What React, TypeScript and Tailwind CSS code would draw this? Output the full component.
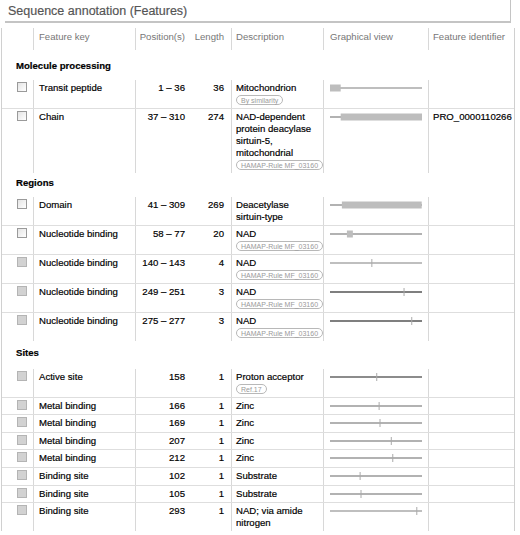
import React from "react";

const COLS = "grid grid-cols-[31px_102px_55px_41px_92px_105px_86px]";
const TRACK_W = 92;
const SEQ_LEN = 310;
const sx = (p: number) => (p * TRACK_W) / SEQ_LEN;

type Mark = { start: number; end: number; tick?: boolean };

interface Feature {
  key: string;
  pos: string;
  len: number;
  desc: string;
  badge?: string;
  id?: string;
  filled?: boolean;
  tall?: boolean;
  mark: Mark;
  line: string;
}

const sections: { title: string; pt: string; pb: string; rows: Feature[] }[] = [
  {
    title: "Molecule processing",
    pt: "pt-[4px]",
    pb: "pb-[8px]",
    rows: [
      { key: "Transit peptide", pos: "1 – 36", len: 36, desc: "Mitochondrion", badge: "By similarity", mark: { start: 1, end: 36 }, line: "#a8a8a8" },
      {
        key: "Chain",
        pos: "37 – 310",
        len: 274,
        desc: "NAD-dependent protein deacylase sirtuin-5, mitochondrial",
        badge: "HAMAP-Rule MF_03160",
        id: "PRO_0000110266",
        mark: { start: 37, end: 310 },
        line: "#999",
      },
    ],
  },
  {
    title: "Regions",
    pt: "pt-[4px]",
    pb: "pb-[8px]",
    rows: [
      { key: "Domain", pos: "41 – 309", len: 269, desc: "Deacetylase sirtuin-type", mark: { start: 41, end: 309 }, line: "#999" },
      { key: "Nucleotide binding", pos: "58 – 77", len: 20, desc: "NAD", badge: "HAMAP-Rule MF_03160", mark: { start: 58, end: 77 }, line: "#999" },
      { key: "Nucleotide binding", pos: "140 – 143", len: 4, desc: "NAD", badge: "HAMAP-Rule MF_03160", filled: true, mark: { start: 140, end: 143, tick: true }, line: "#aaa" },
      { key: "Nucleotide binding", pos: "249 – 251", len: 3, desc: "NAD", badge: "HAMAP-Rule MF_03160", filled: true, mark: { start: 249, end: 251, tick: true }, line: "#555" },
      { key: "Nucleotide binding", pos: "275 – 277", len: 3, desc: "NAD", badge: "HAMAP-Rule MF_03160", filled: true, mark: { start: 275, end: 277, tick: true }, line: "#555" },
    ],
  },
  {
    title: "Sites",
    pt: "pt-[6px]",
    pb: "pb-[10px]",
    rows: [
      { key: "Active site", pos: "158", len: 1, desc: "Proton acceptor", badge: "Ref.17", filled: true, mark: { start: 158, end: 158, tick: true }, line: "#666" },
      { key: "Metal binding", pos: "166", len: 1, desc: "Zinc", filled: true, mark: { start: 166, end: 166, tick: true }, line: "#999" },
      { key: "Metal binding", pos: "169", len: 1, desc: "Zinc", filled: true, tall: true, mark: { start: 169, end: 169, tick: true }, line: "#999" },
      { key: "Metal binding", pos: "207", len: 1, desc: "Zinc", filled: true, mark: { start: 207, end: 207, tick: true }, line: "#999" },
      { key: "Metal binding", pos: "212", len: 1, desc: "Zinc", filled: true, tall: true, mark: { start: 212, end: 212, tick: true }, line: "#999" },
      { key: "Binding site", pos: "102", len: 1, desc: "Substrate", filled: true, tall: true, mark: { start: 102, end: 102, tick: true }, line: "#999" },
      { key: "Binding site", pos: "105", len: 1, desc: "Substrate", filled: true, mark: { start: 105, end: 105, tick: true }, line: "#999" },
      { key: "Binding site", pos: "293", len: 1, desc: "NAD; via amide nitrogen", filled: true, mark: { start: 293, end: 293, tick: true }, line: "#aaa" },
    ],
  },
];

const Box = ({ filled }: { filled?: boolean }) =>
  filled ? (
    <div className="h-[10px] w-[10px] border border-[#b4b4b4] bg-[#d2d2d2]" />
  ) : (
    <div className="h-[10px] w-[10px] border border-[#9a9a9a] bg-gradient-to-br from-[#e4e4e4] to-white" />
  );

const Badge = ({ label }: { label: string }) => (
  <span className="inline-flex h-[10px] items-center whitespace-nowrap rounded-full border border-[#b8b8b8] px-[4px] text-[7px] leading-none text-[#9a9a9a] [-webkit-text-stroke:0px]">
    {label}
  </span>
);

const Track = ({ mark, line }: { mark: Mark; line: string }) => {
  const x1 = sx(mark.start - 1);
  const x2 = sx(mark.end);
  return (
    <svg width={TRACK_W} height={12} className="block">
      <line x1={0} y1={6} x2={TRACK_W} y2={6} stroke={line} strokeWidth={1.5} />
      {mark.tick ? (
        <line x1={(x1 + x2) / 2} y1={2} x2={(x1 + x2) / 2} y2={10} stroke="#aaa" strokeWidth={1} />
      ) : (
        <rect x={x1} y={2.5} width={x2 - x1} height={7} fill="#bdbdbd" />
      )}
    </svg>
  );
};

const divider = "border-l border-[#d8d8d8]";

function FeatureRow({ f, first }: { f: Feature; first: boolean }) {
  const cell = `leading-[12px] pt-[2px] ${f.tall ? "pb-[3px]" : "pb-[2px]"}`;
  return (
    <div className={`${COLS} ${first ? "" : "border-t border-[#dedede]"}`}>
      <div className="pl-[15px] pt-[2px]">
        <Box filled={f.filled} />
      </div>
      <div className={`${cell} ${divider} pl-[5px]`}>{f.key}</div>
      <div className={`${cell} ${divider} pr-[5px] text-right`}>{f.pos}</div>
      <div className={`${cell} pr-[7px] text-right`}>{f.len}</div>
      <div className={`${cell} ${divider} pl-[4px] pr-[3px]`}>
        <div>{f.desc}</div>
        {f.badge && (
          <div className="flex h-[12px] items-center">
            <Badge label={f.badge} />
          </div>
        )}
      </div>
      <div className={`${cell} ${divider} pl-[6px]`}>
        <Track mark={f.mark} line={f.line} />
      </div>
      <div className={`${cell} ${divider} pl-[4px]`}>{f.id}</div>
    </div>
  );
}

export default function App() {
  return (
    <div className="h-[535px] w-[520px] overflow-hidden bg-white font-['Liberation_Sans',Arial,sans-serif] text-[9.6px] text-black [-webkit-text-stroke:0.18px]">
      <div className="ml-[5px] h-[23px] w-[506px] border-r border-b-2 border-[#c4c4c4] pl-[3px] pt-[4px] text-[12.5px] leading-[15px] text-[#555]">
        Sequence annotation (Features)
      </div>
      <div className="ml-[1px] w-[514px] border-x border-[#d0d0d0]">
        <div className={`${COLS} mt-[5px] h-[22px] text-[#777] [-webkit-text-stroke:0px]`}>
          <div />
          <div className={`${divider} pl-[5px] pt-[3px] leading-[12px]`}>Feature key</div>
          <div className={`${divider} pr-[5px] pt-[3px] text-right leading-[12px]`}>Position(s)</div>
          <div className="pr-[7px] pt-[3px] text-right leading-[12px]">Length</div>
          <div className={`${divider} pl-[4px] pt-[3px] leading-[12px]`}>Description</div>
          <div className={`${divider} pl-[6px] pt-[3px] leading-[12px]`}>Graphical view</div>
          <div className={`${divider} pl-[4px] pt-[3px] leading-[12px]`}>Feature identifier</div>
        </div>
        {sections.map((s, si) => (
          <div key={s.title}>
            <div className={`${s.pt} ${s.pb} ${si === 0 ? "mt-[6px]" : ""} pl-[14px] font-bold leading-[12px]`}>
              {s.title}
            </div>
            {s.rows.map((f, i) => (
              <FeatureRow key={f.key + f.pos} f={f} first={i === 0} />
            ))}
          </div>
        ))}
      </div>
    </div>
  );
}
